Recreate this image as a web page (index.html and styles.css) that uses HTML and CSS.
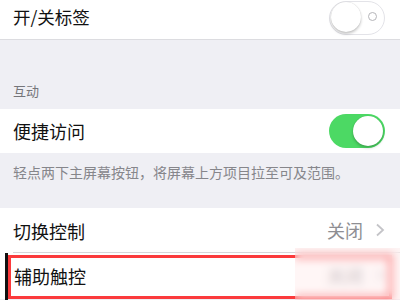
FILE: index.html
```html
<!DOCTYPE html>
<html lang="zh-CN">
<head>
<meta charset="utf-8">
<link rel="stylesheet" href="styles.css">
</head>
<body>
<div class="screen">
  <div class="row row-top">
    <span class="label">开/关标签</span>
    <span class="toggle off"><span class="knob"></span><span class="o-mark"></span></span>
  </div>
  <div class="section-header">互动</div>
  <div class="row">
    <span class="label">便捷访问</span>
    <span class="toggle on"><span class="knob"></span></span>
  </div>
  <div class="section-footer">轻点两下主屏幕按钮，将屏幕上方项目拉至可及范围。</div>
  <div class="row row-sep">
    <span class="label">切换控制</span>
    <span class="value">关闭<svg class="chev" width="10" height="14" viewBox="0 0 10 14"><polyline points="2,1.5 8,7 2,12.5" fill="none" stroke="#c4c4c8" stroke-width="1.8"/></svg></span>
  </div>
  <div class="row row-last">
    <span class="label">辅助触控</span>
    <span class="value faint">关闭<svg class="chev" width="10" height="14" viewBox="0 0 10 14"><polyline points="2,1.5 8,7 2,12.5" fill="none" stroke="#d4d4d8" stroke-width="1.8"/></svg></span>
  </div>
  <div class="highlight"></div>
  <div class="black-bar"></div>
  <div class="blur-patch"></div>
</div>
</body>
</html>
```

FILE: styles.css
```css
html, body {
  margin: 0;
  padding: 0;
}
body {
  width: 400px;
  height: 300px;
  overflow: hidden;
  background: #efeff4;
  font-family: "Noto Sans CJK SC", "Noto Sans", sans-serif;
}
.screen {
  position: relative;
  width: 400px;
  height: 300px;
  display: flex;
  flex-direction: column;
}
.row {
  background: #fff;
  height: 44px;
  display: flex;
  align-items: center;
  justify-content: space-between;
  padding: 0 15px 0 13px;
  flex-shrink: 0;
}
.row-top {
  height: 33px;
  padding-bottom: 6px;
  border-bottom: 1px solid #dcdce0;
}
.row-sep {
  height: 45px;
  position: relative;
}
.row-sep::after {
  content: "";
  position: absolute;
  left: 13px;
  right: 0;
  bottom: 0;
  height: 1px;
  background: #d6d6da;
}
.row-last {
  height: 46px;
  padding-left: 14px;
}
.label {
  font-size: 18px;
  color: #111;
}
.row-top .label {
  font-size: 17.5px;
}
.section-header {
  height: 69px;
  box-sizing: border-box;
  padding: 0 13px 9px;
  display: flex;
  align-items: flex-end;
  font-size: 13px;
  color: #75757a;
  flex-shrink: 0;
}
.section-footer {
  height: 55px;
  box-sizing: border-box;
  padding: 9px 13px 0;
  font-size: 14px;
  line-height: 20px;
  color: #86868b;
  flex-shrink: 0;
}
.value {
  display: flex;
  align-items: center;
  gap: 12px;
  font-size: 18px;
  color: #8e8e93;
  margin-top: -2px;
}
.value.faint {
  color: #b4b4b8;
}
.chev {
  display: block;
}
.toggle {
  position: relative;
  width: 56px;
  height: 34px;
  border-radius: 17px;
  box-sizing: border-box;
  flex-shrink: 0;
}
.toggle.on {
  background: #4cd964;
}
.toggle.off {
  background: #fff;
  border: 1.5px solid #e3e3e8;
  margin-top: 2px;
}
.knob {
  position: absolute;
  width: 30px;
  height: 30px;
  border-radius: 50%;
  background: #fff;
  box-shadow: 0 2px 3px rgba(0,0,0,0.22), 0 0 1px rgba(0,0,0,0.2);
}
.toggle.on .knob {
  top: 2px;
  right: 2px;
}
.toggle.off .knob {
  top: 0.5px;
  left: 0.5px;
}
.o-mark {
  position: absolute;
  right: 7px;
  top: 10.5px;
  width: 7px;
  height: 7px;
  border: 1.5px solid #b5b5b9;
  border-radius: 50%;
}
.highlight {
  position: absolute;
  left: 8px;
  top: 255px;
  width: 384px;
  height: 44px;
  box-sizing: border-box;
  border: 3px solid #fb3a3c;
}
.black-bar {
  position: absolute;
  left: 5px;
  top: 253px;
  width: 3px;
  height: 47px;
  background: #111;
}
.blur-patch {
  position: absolute;
  left: 295px;
  top: 248px;
  width: 105px;
  height: 52px;
  backdrop-filter: blur(4px);
  -webkit-backdrop-filter: blur(4px);
  background: rgba(255, 225, 225, 0.3);
}
```
